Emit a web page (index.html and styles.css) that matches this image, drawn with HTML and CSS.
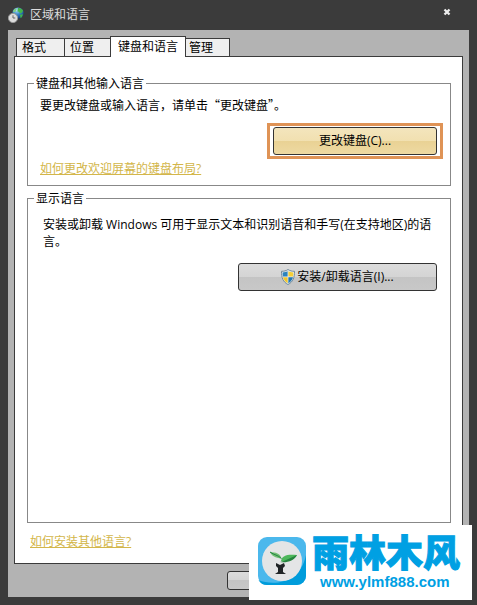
FILE: index.html
```html
<!DOCTYPE HTML>
<html lang="zh-CN">

<head>
    <meta charset="utf-8">
    <title>区域和语言</title>
    <link rel="stylesheet" href="styles.css">
</head>

<body>

<div class="window">

    <header class="titlebar">
        <svg class="globe" viewBox="0 0 16 16" width="16" height="16">
            <defs>
                <radialGradient id="sea" cx="40%" cy="25%" r="75%">
                    <stop offset="0" stop-color="#b5e2f5"/>
                    <stop offset="0.5" stop-color="#3a87c8"/>
                    <stop offset="1" stop-color="#123f86"/>
                </radialGradient>
            </defs>
            <circle cx="10" cy="6" r="5.6" fill="url(#sea)"/>
            <path d="M10 1c2-.3 4 .8 5 2.6l-1 2.2-2 .6-1-1.6-1.6-.4zM12 8l2.6-1c.2 2-.7 3.500-2 4.300z" fill="#43b649"/>
            <path d="M5 4l2-2.400 1.600.4-1 2.400-2 1z" fill="#7fce84"/>
            <circle cx="5" cy="11" r="4.600" fill="#dcdcdc" stroke="#999"/>
            <path d="M5 8.300V11h2.300" fill="none" stroke="#666"/>
        </svg>
        <h1>区域和语言</h1>
        <button class="close" aria-label="关闭">
            <svg viewBox="0 0 8 8" width="8" height="8">
                <path d="M1.500 1.500l5 5M6.500 1.500l-5 5" stroke="#eee" stroke-width="2.300"/>
            </svg>
        </button>
    </header>

    <main class="content">
        <div class="tabs" role="tablist">
            <button class="tab first" role="tab">格式</button>
            <button class="tab" role="tab">位置</button>
            <button class="tab active" role="tab" aria-selected="true">键盘和语言</button>
            <button class="tab last" role="tab">管理</button>
        </div>

        <div class="panel" role="tabpanel">
            <fieldset class="keyboards">
                <legend>键盘和其他输入语言</legend>
                <p class="hint">要更改键盘或输入语言，请单击“更改键盘”。</p>
                <div class="highlight">
                    <button class="btn gold">更改键盘(C)...</button>
                </div>
                <a class="link" href="#">如何更改欢迎屏幕的键盘布局?</a>
            </fieldset>

            <fieldset class="display">
                <legend>显示语言</legend>
                <p>安装或卸载 Windows 可用于显示文本和识别语音和手写(在支持地区)的语言。</p>
                <button class="btn install">
                    <svg viewBox="0 0 14 16" width="14" height="16">
                        <path d="M7 .5c2 1.400 4 1.800 6.500 1.800C13.600 8.500 12 13 7 15.500 2 13 .4 8.500.5 2.300 3 2.300 5 1.900 7 .5z" fill="#e8edf0" stroke="#70899a"/>
                        <path d="M6.600 2.300v5.300H1.900C1.700 6.200 1.600 5 1.600 3.500c2-.1 3.500-.4 5-1.200z" fill="#2c83bd"/>
                        <path d="M7.400 2.300v5.300h4.700c.2-1.400.3-2.600.3-4.100-2-.1-3.500-.4-5-1.200z" fill="#f5cf36"/>
                        <path d="M6.600 8.300v5.900C4 12.700 2.600 10.800 2 8.300z" fill="#f0c52b"/>
                        <path d="M7.400 8.300v5.900c2.600-1.500 4-3.400 4.600-5.900z" fill="#2476b0"/>
                    </svg>
                    安装/卸载语言(I)...
                </button>
            </fieldset>

            <a class="link more" href="#">如何安装其他语言?</a>
        </div>

        <div class="actions">
            <button class="btn ok" aria-label="确定"></button>
        </div>
    </main>

    <div class="brand">
        <svg viewBox="0 0 48 48" width="48" height="48">
            <rect width="48" height="48" rx="9" fill="#4bb8ec"/>
            <path d="M48 18v21a9 9 0 0 1-9 9H9c-4 0-7-2-8.500-5C15 49 42 47 48 18z" fill="#009cdb"/>
            <circle cx="24" cy="24" r="20" fill="#e4e5e6"/>
            <path d="M12 15c6 .5 10 1 11.500 6.500C17 21 14 19 12 15z" fill="#72be72"/>
            <path d="M12 15c4 3 8 3 11.500 6.500" fill="none" stroke="#238344"/>
            <path d="M23 24c1-6 7-7 16-6-3 5-10 7-16 6z" fill="#4db75b"/>
            <path d="M22 25c5-1 10-4 17-7-3 6-10 8-17 7z" fill="#25843e"/>
            <path d="M18 26l4 2 4-2 1 3-2 2v4l3 2H17l3-2v-4l-2-2z" fill="#202426"/>
        </svg>
        <div class="brand-text">
            <div class="brand-name">雨林木风</div>
            <div class="brand-url">www.ylmf888.com</div>
        </div>
    </div>

</div>

</body>

</html>
```
FILE: styles.css
```css
* {
    box-sizing: border-box;
}

body {
    margin: 0;
    font: 12px/16px "Open Sans", "Noto Sans CJK SC", sans-serif;
    color: #000;
}

button {
    font: inherit;
    color: inherit;
    padding: 0;
}

p {
    margin: 0;
    line-height: 17px;
}

.window {
    position: relative;
    display: flex;
    flex-direction: column;
    min-height: 100vh;
    padding: 0 8px 8px;
    background: #3b3b3b;
}

/* title bar */

.titlebar {
    display: flex;
    align-items: center;
    height: 30px;
    padding-right: 18px;
}

.titlebar h1 {
    flex: 1;
    margin: 0 0 0 6px;
    font-size: 12px;
    font-weight: normal;
    color: #ddd;
}

.close {
    display: flex;
    align-self: flex-start;
    margin-top: 8px;
    background: none;
    border: none;
}

.content {
    flex: 1;
    display: flex;
    flex-direction: column;
    padding: 6px 6px 7px;
    background: #b3b3b3;
}

/* tabs */

.tabs {
    display: flex;
    align-items: flex-end;
    padding-left: 2px;
}

.tab {
    height: 18px;
    width: 46px;
    padding: 1px 0 0 5px;
    text-align: left;
    background: #efefef;
    border: 1px solid #3b3b3b;
    border-width: 1px 0 0 1px;
}

.tab.first {
    width: 48px;
}

.tab.active {
    position: relative;
    width: 76px;
    height: 21px;
    margin-bottom: -1px;
    padding: 0 0 1px 7px;
    background: #fff;
    border-right-width: 1px;
}

.tab.last {
    width: 44px;
    padding-left: 3px;
    border-left: none;
    border-right-width: 1px;
}

.panel {
    flex: 1;
    display: flex;
    flex-direction: column;
    align-items: flex-start;
    padding: 17px 11px 13px 12px;
    background: #fff;
    border: 1px solid #3b3b3b;
}

/* groups */

fieldset {
    display: flex;
    flex-direction: column;
    width: 100%;
    min-width: 0;
    margin: 0;
    border: 1px solid #888;
}

legend {
    padding: 2px 2px 0;
}

.keyboards {
    padding: 4px 7px 8px 12px;
}

.keyboards legend {
    margin-left: -6px;
}

.display {
    flex: 1;
    margin: 3px 0 11px;
    padding: 9px 13px 12px 15px;
}

.display legend {
    margin-left: -9px;
}

.hint {
    font-family: "Noto Sans CJK SC", sans-serif;
}

.highlight {
    align-self: flex-end;
    margin: 10px 0 2px;
    padding: 1px 3px;
    border: 3px solid #df9356;
}

.link {
    color: #d3b64a;
}

.more {
    margin-left: 3px;
}

/* buttons */

.btn {
    display: flex;
    align-items: center;
    justify-content: center;
    height: 28px;
    background: linear-gradient(#dcdcdc, #d4d4d4 50%, #c4c4c4 50%, #c8c8c8);
    border: 1px solid #333;
    border-radius: 3px;
}

.btn.gold {
    width: 164px;
    background: linear-gradient(#f3e5bd, #f1e0b0 50%, #e9d294 50%, #eed9a2);
}

.btn.install {
    align-self: flex-end;
    gap: 2px;
    width: 199px;
    margin-top: 13px;
}

.btn.ok {
    width: 75px;
    height: 19px;
}

.actions {
    display: flex;
    justify-content: flex-end;
    padding: 7px 161px 0 0;
}

/* brand badge over the corner */

.brand {
    position: absolute;
    right: 5px;
    bottom: 5px;
    display: flex;
    align-items: flex-start;
    gap: 6px;
    width: 223px;
    height: 75px;
    padding: 12px 8px 0 9px;
    background: #fff;
    color: #00a0e3;
    white-space: nowrap;
}

.brand-name {
    font: 900 37px/28px "Noto Sans CJK SC", sans-serif;
    -webkit-text-stroke: 1px #00a0e3;
}

.brand-url {
    margin-top: 9px;
    padding-left: 8px;
    font: bold 15px/16px "Liberation Sans", sans-serif;
}
```
